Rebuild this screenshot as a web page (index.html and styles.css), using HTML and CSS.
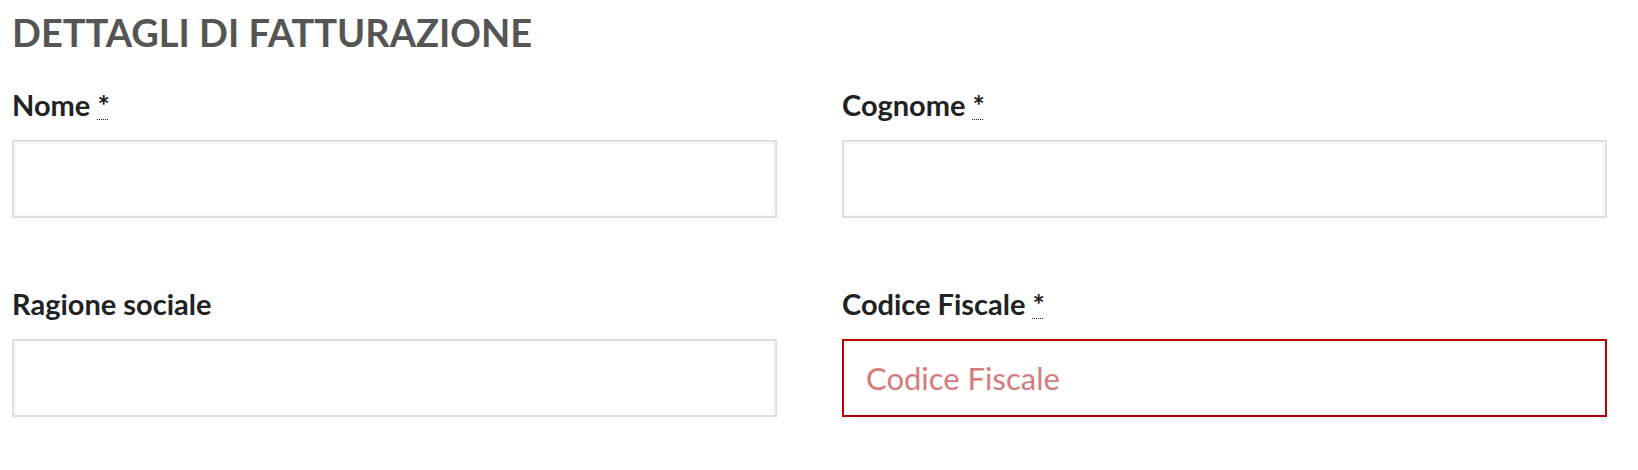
FILE: index.html
```html
<!DOCTYPE html>
<html lang="it">
<head>
<meta charset="utf-8">
<title>Dettagli di fatturazione</title>
<link rel="stylesheet" href="styles.css">
</head>
<body>
<div class="billing">
  <h1 class="billing-title">DETTAGLI DI FATTURAZIONE</h1>
  <div class="fields">
    <div class="field">
      <label class="field-label" for="nome">Nome <abbr class="req" title="obbligatorio">*</abbr></label>
      <input class="field-input" id="nome" type="text">
    </div>
    <div class="field">
      <label class="field-label" for="cognome">Cognome <abbr class="req" title="obbligatorio">*</abbr></label>
      <input class="field-input" id="cognome" type="text">
    </div>
    <div class="field">
      <label class="field-label" for="ragione">Ragione sociale</label>
      <input class="field-input" id="ragione" type="text">
    </div>
    <div class="field">
      <label class="field-label" for="cf">Codice Fiscale <abbr class="req" title="obbligatorio">*</abbr></label>
      <input class="field-input field-input--error" id="cf" type="text" placeholder="Codice Fiscale">
    </div>
  </div>
</div>
</body>
</html>
```

FILE: styles.css
```css
html, body {
  margin: 0;
  padding: 0;
  background: #ffffff;
}

body {
  font-family: Lato, "Open Sans", "Liberation Sans", sans-serif;
  color: #222222;
}

.billing {
  width: 1595px;
  padding: 9px 0 0 12px;
}

.billing-title {
  margin: 0 0 33px;
  font-size: 38px;
  line-height: 46px;
  font-weight: 700;
  color: #555555;
}

.fields {
  display: grid;
  grid-template-columns: 1fr 1fr;
  column-gap: 65px;
  row-gap: 69px;
}

.field {
  display: flex;
  flex-direction: column;
}

.field-label {
  display: block;
  font-size: 29px;
  line-height: 34px;
  font-weight: 700;
  color: #222222;
  margin-bottom: 18px;
}

.req {
  text-decoration: underline dotted;
  text-decoration-thickness: 1px;
  text-underline-offset: 3px;
  cursor: help;
  color: #222222;
}

.field-input {
  box-sizing: border-box;
  width: 100%;
  height: 78px;
  margin: 0;
  padding: 0 22px;
  border: 2px solid #dedede;
  border-radius: 0;
  background: #ffffff;
  outline: 1px dotted #ececec;
  outline-offset: -4px;
  font-family: Lato, "Open Sans", "Liberation Sans", sans-serif;
  font-size: 31px;
  color: #333333;
}

.field-input--error {
  border-color: #b40000;
}

.field-input::placeholder {
  color: #d57b7b;
  opacity: 1;
}
```
